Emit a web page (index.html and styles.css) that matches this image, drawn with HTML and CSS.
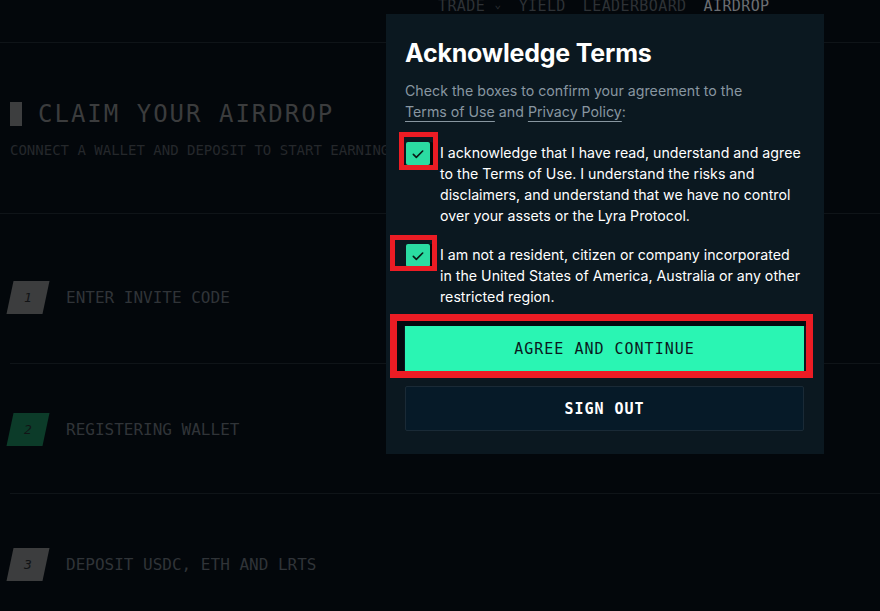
FILE: index.html
```html
<!DOCTYPE html>
<html lang="en">
<head>
    <meta charset="UTF-8">
    <meta name="viewport" content="width=device-width, initial-scale=1.0">
    <title>Claim Your Airdrop</title>
    <link rel="stylesheet" href="styles.css">
</head>
<body>
    <nav class="nav__bar">
        <ul class="nav__links">
            <li class="link">TRADE <span class="chev">&#8964;</span></li>
            <li class="link">YIELD</li>
            <li class="link">LEADERBOARD</li>
            <li class="link active">AIRDROP</li>
        </ul>
    </nav>

    <header class="hero">
        <h1 class="hero__title"><span class="hero__block"></span>CLAIM YOUR AIRDROP</h1>
        <p class="hero__sub">CONNECT A WALLET AND DEPOSIT TO START EARNING POINTS</p>
    </header>

    <section class="steps">
        <div class="step step--first">
            <div class="step__num"><span>1</span></div>
            <div class="step__label">ENTER INVITE CODE</div>
        </div>
        <div class="step step--second">
            <div class="step__num step__num--active"><span>2</span></div>
            <div class="step__label">REGISTERING WALLET</div>
        </div>
        <div class="step step--third">
            <div class="step__num"><span>3</span></div>
            <div class="step__label">DEPOSIT USDC, ETH AND LRTS</div>
        </div>
    </section>

    <!-- Terms modal -->
    <div class="modal">
        <h2 class="modal__title">Acknowledge Terms</h2>
        <p class="modal__desc">Check the boxes to confirm your agreement to the <a href="#">Terms of Use</a> and <a href="#">Privacy Policy</a>:</p>

        <label class="check">
            <span class="check__box">
                <svg viewBox="0 0 24 24" width="16" height="16"><path d="M5 12.5l4.5 4.5L19 7.5" fill="none" stroke="#0a1a16" stroke-width="2.4" stroke-linecap="round" stroke-linejoin="round"/></svg>
            </span>
            <span class="check__text">I acknowledge that I have read, understand and agree to the Terms of Use. I understand the risks and disclaimers, and understand that we have no control over your assets or the Lyra Protocol.</span>
        </label>

        <label class="check">
            <span class="check__box">
                <svg viewBox="0 0 24 24" width="16" height="16"><path d="M5 12.5l4.5 4.5L19 7.5" fill="none" stroke="#0a1a16" stroke-width="2.4" stroke-linecap="round" stroke-linejoin="round"/></svg>
            </span>
            <span class="check__text">I am not a resident, citizen or company incorporated in the United States of America, Australia or any other restricted region.</span>
        </label>

        <button class="btn btn--primary">AGREE AND CONTINUE</button>
        <button class="btn btn--secondary">SIGN OUT</button>
    </div>

    <!-- red annotation boxes -->
    <div class="mark mark--one"></div>
    <div class="mark mark--two"></div>
    <div class="mark mark--three"></div>
</body>
</html>
```

FILE: styles.css
```css
:root {
   --bg: #03070b;
   --modal-bg: #0b1820;
   --green: #2af5b3;
   --line: #0f1418;
   --mono: "DejaVu Sans Mono", "Liberation Mono", monospace;
   --sans: Inter, "Noto Sans", sans-serif;
   --mark: #ec1c24;
}

* {
   padding: 0;
   margin: 0;
   box-sizing: border-box;
}

body {
   background-color: var(--bg);
   font-family: var(--mono);
   overflow: hidden;
   height: 611px;
   position: relative;
}

a {
   color: inherit;
}

.nav__bar {
   display: flex;
   align-items: flex-start;
   height: 43px;
   border-bottom: 1px solid var(--line);
}

.nav__links {
   list-style: none;
   display: flex;
   gap: 17px;
   padding-left: 438px;
   margin-top: -3px;
   font-size: 15px;
   line-height: 18px;
   color: #2e3236;
   letter-spacing: 0.4px;
}

.chev {
   font-size: 11px;
   position: relative;
   top: -3px;
}

.link.active {
   color: #6b6e72;
}

.hero {
   height: 171px;
   border-bottom: 1px solid var(--line);
   padding: 58px 0 0 10px;
}

.hero__title {
   display: flex;
   align-items: center;
   gap: 16px;
   font-size: 24px;
   font-weight: 400;
   letter-spacing: 2px;
   color: #3b3c3d;
   line-height: 26px;
}

.hero__block {
   width: 12px;
   height: 24px;
   background-color: #3d3e3f;
}

.hero__sub {
   margin-top: 15px;
   font-size: 14px;
   color: #25282b;
   white-space: nowrap;
}

.steps {
   padding-left: 10px;
}

.step {
   display: flex;
   align-items: center;
   gap: 20px;
   border-bottom: 1px solid var(--line);
}

.step--first {
   height: 150px;
   padding-top: 18px;
}

.step--second {
   height: 130px;
   padding-top: 2px;
}

.step--third {
   height: 130px;
   padding-top: 10px;
   border-bottom: none;
}

.step__num {
   width: 36px;
   height: 33px;
   background-color: #3c3d3e;
   transform: skewX(-12deg);
   display: flex;
   align-items: center;
   justify-content: center;
}

.step__num span {
   transform: skewX(12deg);
   font-style: italic;
   font-size: 13px;
   color: #121416;
}

.step__num--active {
   background-color: #0c3b29;
}

.step__label {
   font-size: 16px;
   color: #303438;
}

/* Modal */
.modal {
   position: absolute;
   left: 386px;
   top: 14px;
   width: 438px;
   height: 440px;
   background-color: var(--modal-bg);
   padding: 24px 20px 0 19px;
   font-family: var(--sans);
   color: #ffffff;
}

.modal__title {
   font-size: 25px;
   line-height: 30px;
   font-weight: 700;
   letter-spacing: -0.2px;
}

.modal__desc {
   margin-top: 12px;
   font-size: 14.2px;
   line-height: 21px;
   color: #8896a0;
   padding-right: 40px;
}

.modal__desc a {
   text-underline-offset: 4px;
}

.check {
   display: flex;
   gap: 10px;
   margin-top: 20px;
}

.check + .check {
   margin-top: 18px;
}

.check__box {
   flex: none;
   width: 24px;
   height: 23px;
   margin-left: 1px;
   background-color: #2bdca2;
   box-shadow: 3px 0 0 #040809;
   border-radius: 2px;
   display: flex;
   align-items: center;
   justify-content: center;
}

.check__text {
   font-size: 14.2px;
   line-height: 21px;
   color: #ffffff;
}

.btn {
   display: block;
   width: 399px;
   height: 45px;
   font-family: var(--mono);
   font-size: 15px;
   letter-spacing: 1px;
   border: none;
   cursor: pointer;
}

.btn--primary {
   margin-top: 19px;
   background-color: var(--green);
   color: #0a1a1e;
}

.btn--secondary {
   margin-top: 15px;
   background-color: #061a28;
   border: 1px solid #1a2a36;
   border-radius: 2px;
   color: #ffffff;
   font-weight: 700;
}

/* Screenshot annotations */
.mark {
   position: absolute;
   border: 5px solid var(--mark);
}

.mark--one {
   left: 399px;
   top: 132px;
   width: 39px;
   height: 38px;
}

.mark--two {
   left: 390px;
   top: 235px;
   width: 47px;
   height: 36px;
}

.mark--three {
   left: 390px;
   top: 314px;
   width: 423px;
   height: 64px;
   border-width: 7px;
   box-shadow: inset 7px 5px 0 #040a0e;
}
```
